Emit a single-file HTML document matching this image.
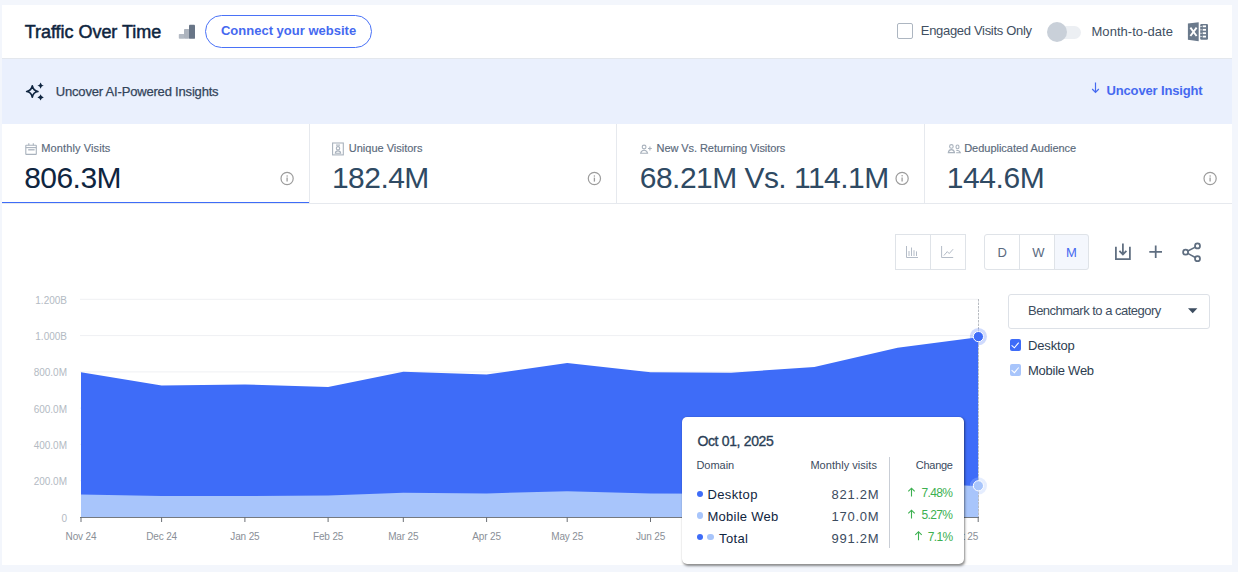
<!DOCTYPE html>
<html><head><meta charset="utf-8"><style>
*{box-sizing:border-box}
html,body{margin:0;padding:0;width:1238px;height:572px;overflow:hidden;background:#f3f6fc;font-family:'Liberation Sans',sans-serif;}
.card{position:absolute;left:2px;top:5px;width:1230px;height:560px;background:#fff}
.t{position:absolute;white-space:nowrap;font-family:'Liberation Sans',sans-serif;}
.abs{position:absolute}
.chart{position:absolute;left:0;top:0}
</style></head><body>
<div class="card"></div>
<div class="abs" style="left:2px;top:58px;width:1230px;height:1px;background:#e3e7ed"></div>
<div class="abs" style="left:2px;top:59px;width:1230px;height:65px;background:#eaf0fd"></div>
<!-- metric dividers -->
<div class="abs" style="left:309px;top:124px;width:1px;height:79px;background:#e6e9ee"></div>
<div class="abs" style="left:616px;top:124px;width:1px;height:79px;background:#e6e9ee"></div>
<div class="abs" style="left:924px;top:124px;width:1px;height:79px;background:#e6e9ee"></div>
<div class="abs" style="left:2px;top:203px;width:1230px;height:1px;background:#e6e9ee"></div>
<div class="abs" style="left:2px;top:202px;width:307px;height:1px;background:#3e6cf8"></div>
<!-- button -->
<div class="abs" style="left:205px;top:15px;width:167px;height:33px;border:1px solid #4a72f7;border-radius:16.5px"></div>
<!-- checkbox -->
<div class="abs" style="left:897px;top:23px;width:16px;height:16px;border:1.5px solid #adb6c1;border-radius:2px"></div>
<!-- toggle -->
<div class="abs" style="left:1050px;top:25.5px;width:31px;height:13px;background:#eceff3;border-radius:7px"></div>
<div class="abs" style="left:1047px;top:22px;width:20px;height:20px;background:#c9d0d9;border-radius:50%"></div>
<!-- toolbar groups -->
<div class="abs" style="left:895px;top:234px;width:71px;height:36px;border:1px solid #dfe3e8"></div>
<div class="abs" style="left:930px;top:234px;width:1px;height:36px;background:#dfe3e8"></div>
<div class="abs" style="left:1054px;top:234px;width:35px;height:36px;background:#f4f7fd;border-radius:0 3px 3px 0"></div>
<div class="abs" style="left:984px;top:234px;width:105px;height:36px;border:1px solid #dfe3e8;border-radius:3px"></div>
<div class="abs" style="left:1019px;top:234px;width:1px;height:36px;background:#dfe3e8"></div>
<div class="abs" style="left:1054px;top:234px;width:1px;height:36px;background:#dfe3e8"></div>
<!-- dropdown -->
<div class="abs" style="left:1008px;top:294px;width:202px;height:35px;border:1px solid #dde1e7;border-radius:3px"></div>
<div class="abs" style="left:1009.6px;top:339.3px;width:11.2px;height:11.4px;background:#3e6cf8;border-radius:2px"></div>
<div class="abs" style="left:1009.6px;top:364.3px;width:11.2px;height:11.4px;background:#a8c5fb;border-radius:2px"></div>
<svg class="chart" width="1238" height="572" viewBox="0 0 1238 572">
<line x1="80" y1="480.7" x2="978" y2="480.7" stroke="#eff0f3" stroke-width="1"/><line x1="80" y1="444.4" x2="978" y2="444.4" stroke="#eff0f3" stroke-width="1"/><line x1="80" y1="408.1" x2="978" y2="408.1" stroke="#eff0f3" stroke-width="1"/><line x1="80" y1="371.9" x2="978" y2="371.9" stroke="#eff0f3" stroke-width="1"/><line x1="80" y1="335.6" x2="978" y2="335.6" stroke="#eff0f3" stroke-width="1"/><line x1="80" y1="299.3" x2="978" y2="299.3" stroke="#eff0f3" stroke-width="1"/>
<polygon points="81.00,517.0 81.00,372.23 161.59,385.47 244.86,384.38 328.13,386.92 403.35,371.69 486.62,374.59 567.21,362.98 650.48,372.23 731.07,372.77 814.34,366.97 897.61,347.74 978.20,337.18 978.20,517.0" fill="#3e6cf8"/>
<polygon points="81.00,517.0 81.00,494.50 161.59,495.96 244.86,495.96 328.13,495.59 403.35,492.69 486.62,493.42 567.21,491.24 650.48,493.42 731.07,493.78 814.34,491.60 897.61,481.62 978.20,486.16 978.20,517.0" fill="#a8c5fb"/>
<line x1="80" y1="517.5" x2="979" y2="517.5" stroke="#75797f" stroke-width="1"/>
<line x1="81.0" y1="517" x2="81.0" y2="522" stroke="#6b6f75" stroke-width="1"/><line x1="161.6" y1="517" x2="161.6" y2="522" stroke="#6b6f75" stroke-width="1"/><line x1="244.9" y1="517" x2="244.9" y2="522" stroke="#6b6f75" stroke-width="1"/><line x1="328.1" y1="517" x2="328.1" y2="522" stroke="#6b6f75" stroke-width="1"/><line x1="403.3" y1="517" x2="403.3" y2="522" stroke="#6b6f75" stroke-width="1"/><line x1="486.6" y1="517" x2="486.6" y2="522" stroke="#6b6f75" stroke-width="1"/><line x1="567.2" y1="517" x2="567.2" y2="522" stroke="#6b6f75" stroke-width="1"/><line x1="650.5" y1="517" x2="650.5" y2="522" stroke="#6b6f75" stroke-width="1"/><line x1="731.1" y1="517" x2="731.1" y2="522" stroke="#6b6f75" stroke-width="1"/><line x1="814.3" y1="517" x2="814.3" y2="522" stroke="#6b6f75" stroke-width="1"/><line x1="897.6" y1="517" x2="897.6" y2="522" stroke="#6b6f75" stroke-width="1"/><line x1="978.2" y1="517" x2="978.2" y2="522" stroke="#6b6f75" stroke-width="1"/>
<line x1="978.5" y1="299" x2="978.5" y2="517" stroke="#b8bcc2" stroke-width="1" stroke-dasharray="2.5,1"/>
<g font-family="Liberation Sans" font-size="10" fill="#b3bac3"><text x="67" y="521.5" text-anchor="end">0</text><text x="67" y="485.2" text-anchor="end">200.0M</text><text x="67" y="448.9" text-anchor="end">400.0M</text><text x="67" y="412.6" text-anchor="end">600.0M</text><text x="67" y="376.4" text-anchor="end">800.0M</text><text x="67" y="340.1" text-anchor="end">1.000B</text><text x="67" y="303.8" text-anchor="end">1.200B</text></g>
<g font-family="Liberation Sans" font-size="10" fill="#8a8f97" letter-spacing="-0.15"><text x="81.0" y="540.4" text-anchor="middle">Nov 24</text><text x="161.6" y="540.4" text-anchor="middle">Dec 24</text><text x="244.9" y="540.4" text-anchor="middle">Jan 25</text><text x="328.1" y="540.4" text-anchor="middle">Feb 25</text><text x="403.3" y="540.4" text-anchor="middle">Mar 25</text><text x="486.6" y="540.4" text-anchor="middle">Apr 25</text><text x="567.2" y="540.4" text-anchor="middle">May 25</text><text x="650.5" y="540.4" text-anchor="middle">Jun 25</text><text x="731.1" y="540.4" text-anchor="middle">Jul 25</text><text x="814.3" y="540.4" text-anchor="middle">Aug 25</text><text x="897.6" y="540.4" text-anchor="middle">Sep 25</text><text x="978.2" y="540.4" text-anchor="end">Oct 25</text></g>
<circle cx="978.4" cy="336.6" r="8.6" fill="#3e6cf8" fill-opacity="0.25"/>
<circle cx="978.4" cy="336.6" r="5.1" fill="#3e6cf8" stroke="#fff" stroke-width="1"/>
<circle cx="978.4" cy="485.8" r="8.6" fill="#a8c5fb" fill-opacity="0.3"/>
<circle cx="978.4" cy="485.8" r="5.1" fill="#a8c5fb" stroke="#fff" stroke-width="1"/>
</svg>
<svg class="chart" width="1238" height="572" viewBox="0 0 1238 572">
<!-- bars icon -->
<rect x="178.8" y="34" width="5.6" height="4.8" rx="0.8" fill="#b3bac4"/>
<rect x="184" y="29" width="5.2" height="9.8" rx="0.8" fill="#adb4be"/>
<rect x="189" y="24.8" width="6" height="14" rx="0.9" fill="#687587"/>
<!-- excel -->
<path d="M1187.9,23.6 L1198.7,22.2 L1198.7,41.3 L1187.9,39.8 Z" fill="#6b7a8c"/>
<path d="M1190.4,27.6 L1196.6,36 M1196.6,27.6 L1190.4,36" stroke="#fff" stroke-width="1.9"/>
<rect x="1200.2" y="23.9" width="7.8" height="15.9" rx="1.2" fill="#6b7a8c"/>
<g fill="#fff">
<rect x="1202.7" y="25.4" width="3.3" height="1.8"/><rect x="1202.7" y="28.9" width="3.3" height="1.8"/>
<rect x="1202.7" y="32.3" width="3.3" height="1.8"/><rect x="1202.7" y="35.7" width="3.3" height="1.8"/>
<rect x="1200.2" y="26" width="1.6" height="0.7"/><rect x="1200.2" y="29.5" width="1.6" height="0.7"/>
<rect x="1200.2" y="32.9" width="1.6" height="0.7"/><rect x="1200.2" y="36.3" width="1.6" height="0.7"/>
</g>
<!-- sparkles -->
<path d="M32.3,85.9 Q33.196,90.604 37.9,91.5 Q33.196,92.396 32.3,97.1 Q31.403999999999996,92.396 26.699999999999996,91.5 Q31.403999999999996,90.604 32.3,85.9 Z" fill="none" stroke="#0f2540" stroke-width="1.75" stroke-linejoin="round"/>
<path d="M40.6,82.39999999999999 Q41.24,84.96 43.800000000000004,85.6 Q41.24,86.24 40.6,88.8 Q39.96,86.24 37.4,85.6 Q39.96,84.96 40.6,82.39999999999999 Z" fill="#0f2540"/>
<path d="M40.6,94.2 Q41.24,96.76 43.800000000000004,97.4 Q41.24,98.04 40.6,100.60000000000001 Q39.96,98.04 37.4,97.4 Q39.96,96.76 40.6,94.2 Z" fill="#0f2540"/>
<!-- down arrow -->
<path d="M1095.5,82.4 V92.3 M1092.2,89 L1095.5,92.4 L1098.8,89" fill="none" stroke="#4569f0" stroke-width="1.2"/>
<!-- calendar -->
<g fill="none" stroke="#a9b2bd" stroke-width="1.1">
<rect x="25.8" y="145.2" width="10.5" height="9.2" rx="0.5"/>
<line x1="25.8" y1="147.6" x2="36.3" y2="147.6"/>
<line x1="28.8" y1="143.2" x2="28.8" y2="145.2"/><line x1="33.3" y1="143.2" x2="33.3" y2="145.2"/>
<line x1="28.2" y1="149.8" x2="34.6" y2="149.8" stroke-width="1.3"/>
</g>
<!-- unique visitors -->
<g fill="none" stroke="#a9b2bd" stroke-width="1.1">
<rect x="332.6" y="143" width="10.7" height="11.9"/>
<line x1="336" y1="145.1" x2="340" y2="145.1"/>
<circle cx="338" cy="148.3" r="1.7"/>
<path d="M335.3,153.3 Q335.6,150.9 338,150.9 Q340.4,150.9 340.7,153.3 Z"/>
</g>
<!-- new vs returning -->
<g fill="none" stroke="#a9b2bd" stroke-width="1.1">
<circle cx="644.1" cy="147" r="1.9"/>
<path d="M640.6,153.3 Q641.2,150.2 644.1,150.2 Q647,150.2 647.6,153.3 Z"/>
<path d="M648,148.5 H651.8 M649.9,146.6 V150.4"/>
</g>
<!-- dedup -->
<g fill="none" stroke="#a9b2bd" stroke-width="1.1">
<circle cx="951.4" cy="146.4" r="1.8"/>
<path d="M948.3,152.6 Q948.8,149.6 951.4,149.6 Q954,149.6 954.5,152.6 Z"/>
<ellipse cx="957.5" cy="146.9" rx="1.5" ry="1.9"/>
<path d="M956.2,150.2 Q959.6,150.2 960.4,152.8 H956.2"/>
</g>
<circle cx="287.1" cy="178.5" r="6.1" fill="none" stroke="#9c9c9c" stroke-width="1.2"/><circle cx="287.1" cy="175.9" r="0.75" fill="#9c9c9c"/><line x1="287.1" y1="177.6" x2="287.1" y2="181.6" stroke="#9c9c9c" stroke-width="1.3"/><circle cx="594.4" cy="178.5" r="6.1" fill="none" stroke="#9c9c9c" stroke-width="1.2"/><circle cx="594.4" cy="175.9" r="0.75" fill="#9c9c9c"/><line x1="594.4" y1="177.6" x2="594.4" y2="181.6" stroke="#9c9c9c" stroke-width="1.3"/><circle cx="902.1" cy="178.4" r="6.1" fill="none" stroke="#9c9c9c" stroke-width="1.2"/><circle cx="902.1" cy="175.8" r="0.75" fill="#9c9c9c"/><line x1="902.1" y1="177.5" x2="902.1" y2="181.5" stroke="#9c9c9c" stroke-width="1.3"/><circle cx="1210.1" cy="178.5" r="6.1" fill="none" stroke="#9c9c9c" stroke-width="1.2"/><circle cx="1210.1" cy="175.9" r="0.75" fill="#9c9c9c"/><line x1="1210.1" y1="177.6" x2="1210.1" y2="181.6" stroke="#9c9c9c" stroke-width="1.3"/>
<!-- chart type icons -->
<g fill="none" stroke="#b4bcc7" stroke-width="1">
<path d="M906.5,246 V257.5 H918"/>
<path d="M909,256 V251 M911.5,256 V247.5 M914,256 V250.2 M916.5,256 V251.4"/>
<path d="M941.6,246 V257.5 H953.2"/>
<path d="M943.9,255.5 L947.3,251.6 L949.2,253.6 L953.1,249.2"/>
</g>
<!-- download / plus / share -->
<g fill="none" stroke="#5f6e80" stroke-width="1.75">
<path d="M1115.9,246.8 V259 H1129.9 V246.8"/>
<path d="M1122.9,243.6 V254.2 M1119.4,250.8 L1122.9,254.4 L1126.4,250.8"/>
<path d="M1149.3,251.8 H1162 M1155.7,245.5 V258"/>
<circle cx="1197.5" cy="245.9" r="2.5"/><circle cx="1185.6" cy="252.2" r="2.5"/><circle cx="1197.5" cy="258.7" r="2.5"/>
<path d="M1187.8,251 L1195.3,247.1 M1187.8,253.4 L1195.3,257.5" stroke-width="1.5"/>
</g>
<!-- dropdown triangle -->
<path d="M1188,308.2 H1197.4 L1192.7,313.2 Z" fill="#3d4d60"/>
<!-- legend checks -->
<path d="M1011.6,345.3 L1014.4,347.8 L1018.7,342.6" fill="none" stroke="#fff" stroke-width="1.05"/>
<path d="M1011.6,370.2 L1014.4,372.7 L1018.7,367.5" fill="none" stroke="#fff" stroke-width="1.05"/>
</svg>
<!-- tooltip -->
<div class="abs" style="left:682px;top:417px;width:281.5px;height:146.8px;background:#fff;border-radius:5px;box-shadow:1px 1.5px 2.5px rgba(0,0,0,0.45),0 0 1px rgba(0,0,0,0.2)"></div>
<div class="abs" style="left:889px;top:457px;width:1px;height:91px;background:#c9ced6"></div>
<div class="abs" style="left:696.8px;top:490.8px;width:6.5px;height:6.5px;border-radius:50%;background:#3e6cf8"></div>
<div class="abs" style="left:696.8px;top:512.2px;width:6.5px;height:6.5px;border-radius:50%;background:#a8c5fb"></div>
<div class="abs" style="left:696.8px;top:533.6px;width:6.5px;height:6.5px;border-radius:50%;background:#3e6cf8"></div>
<div class="abs" style="left:707.2px;top:533.6px;width:6.5px;height:6.5px;border-radius:50%;background:#a8c5fb"></div>
<svg class="chart" width="1238" height="572" viewBox="0 0 1238 572"><g fill="none" stroke="#3cb050" stroke-width="1.1">
<path d="M911.5,488.2 V496.6 M908.3,491.4 L911.5,488.2 L914.7,491.4"/>
<path d="M911.5,510.2 V518.6 M908.3,513.4 L911.5,510.2 L914.7,513.4"/>
<path d="M918.5,531.7 V540.3 M915.3,534.9 L918.5,531.7 L921.7,534.9"/>
</g></svg>
<div class="t" style="left:24.70px;top:23.06px;font-size:18px;line-height:18px;font-weight:400;-webkit-text-stroke:0.5px;color:#0f2540;letter-spacing:-0.031px;">Traffic Over Time</div>
<div class="t" style="left:220.90px;top:24.10px;font-size:13px;line-height:13px;font-weight:700;color:#4569f0;letter-spacing:0.011px;">Connect your website</div>
<div class="t" style="left:920.80px;top:23.60px;font-size:13px;line-height:13px;font-weight:400;color:#3f4f62;letter-spacing:-0.311px;">Engaged Visits Only</div>
<div class="t" style="left:1091.50px;top:24.60px;font-size:13px;line-height:13px;font-weight:400;color:#3f4f62;letter-spacing:0.042px;">Month-to-date</div>
<div class="t" style="left:55.80px;top:85.00px;font-size:13px;line-height:13px;font-weight:400;-webkit-text-stroke:0.25px;color:#33445a;letter-spacing:-0.185px;">Uncover AI-Powered Insights</div>
<div class="t" style="left:1106.50px;top:84.00px;font-size:13px;line-height:13px;font-weight:700;color:#4569f0;letter-spacing:-0.15px;">Uncover Insight</div>
<div class="t" style="left:41.30px;top:142.69px;font-size:11px;line-height:11px;font-weight:400;-webkit-text-stroke:0.15px;color:#5a697b;letter-spacing:0.108px;">Monthly Visits</div>
<div class="t" style="left:348.80px;top:142.69px;font-size:11px;line-height:11px;font-weight:400;-webkit-text-stroke:0.15px;color:#5a697b;letter-spacing:-0.007px;">Unique Visitors</div>
<div class="t" style="left:656.60px;top:142.69px;font-size:11px;line-height:11px;font-weight:400;-webkit-text-stroke:0.15px;color:#5a697b;letter-spacing:-0.076px;">New Vs. Returning Visitors</div>
<div class="t" style="left:964.20px;top:142.69px;font-size:11px;line-height:11px;font-weight:400;-webkit-text-stroke:0.15px;color:#5a697b;letter-spacing:-0.025px;">Deduplicated Audience</div>
<div class="t" style="left:24.20px;top:162.71px;font-size:30px;line-height:30px;font-weight:400;color:#0f2540;letter-spacing:-0.54px;">806.3M</div>
<div class="t" style="left:331.90px;top:162.71px;font-size:30px;line-height:30px;font-weight:400;color:#2f4a63;letter-spacing:-0.52px;">182.4M</div>
<div class="t" style="left:639.80px;top:162.71px;font-size:30px;line-height:30px;font-weight:400;color:#2f4a63;letter-spacing:-0.537px;">68.21M Vs. 114.1M</div>
<div class="t" style="left:946.80px;top:162.71px;font-size:30px;line-height:30px;font-weight:400;color:#2f4a63;letter-spacing:-0.42px;">144.6M</div>
<div class="t" style="left:697.40px;top:434.05px;font-size:14px;line-height:14px;font-weight:400;-webkit-text-stroke:0.35px;color:#2b3f57;letter-spacing:-0.336px;">Oct 01, 2025</div>
<div class="t" style="left:696.40px;top:459.59px;font-size:11px;line-height:11px;font-weight:400;color:#3b4b5e;letter-spacing:-0.02px;">Domain</div>
<div class="t" style="left:810.40px;top:459.59px;font-size:11px;line-height:11px;font-weight:400;color:#3b4b5e;letter-spacing:0.038px;">Monthly visits</div>
<div class="t" style="left:915.80px;top:459.59px;font-size:11px;line-height:11px;font-weight:400;color:#3b4b5e;letter-spacing:-0.28px;">Change</div>
<div class="t" style="left:707.40px;top:488.00px;font-size:13px;line-height:13px;font-weight:400;color:#0f2540;letter-spacing:0.383px;">Desktop</div>
<div class="t" style="left:707.40px;top:509.80px;font-size:13px;line-height:13px;font-weight:400;color:#0f2540;letter-spacing:0.278px;">Mobile Web</div>
<div class="t" style="left:719.00px;top:531.70px;font-size:13px;line-height:13px;font-weight:400;color:#0f2540;letter-spacing:0.375px;">Total</div>
<div class="t" style="left:831.60px;top:487.70px;font-size:13px;line-height:13px;font-weight:400;color:#3b4b5e;letter-spacing:0.74px;">821.2M</div>
<div class="t" style="left:831.60px;top:509.80px;font-size:13px;line-height:13px;font-weight:400;color:#3b4b5e;letter-spacing:0.74px;">170.0M</div>
<div class="t" style="left:831.60px;top:531.70px;font-size:13px;line-height:13px;font-weight:400;color:#3b4b5e;letter-spacing:0.74px;">991.2M</div>
<div class="t" style="left:921.50px;top:486.64px;font-size:12px;line-height:12px;font-weight:400;color:#3cb050;letter-spacing:-0.675px;">7.48%</div>
<div class="t" style="left:921.50px;top:508.64px;font-size:12px;line-height:12px;font-weight:400;color:#3cb050;letter-spacing:-0.675px;">5.27%</div>
<div class="t" style="left:927.70px;top:530.74px;font-size:12px;line-height:12px;font-weight:400;color:#3cb050;letter-spacing:-0.633px;">7.1%</div>
<div class="t" style="left:1028.00px;top:303.90px;font-size:13px;line-height:13px;font-weight:400;color:#3d4d60;letter-spacing:-0.514px;">Benchmark to a category</div>
<div class="t" style="left:1028.00px;top:338.90px;font-size:13px;line-height:13px;font-weight:400;color:#2d3d50;letter-spacing:-0.15px;">Desktop</div>
<div class="t" style="left:1028.00px;top:363.80px;font-size:13px;line-height:13px;font-weight:400;color:#2d3d50;letter-spacing:-0.256px;">Mobile Web</div>
<div class="t" style="left:997.60px;top:246.10px;font-size:13px;line-height:13px;font-weight:400;color:#5a6a80;letter-spacing:0px;">D</div>
<div class="t" style="left:1032.20px;top:246.10px;font-size:13px;line-height:13px;font-weight:400;color:#5a6a80;letter-spacing:0px;">W</div>
<div class="t" style="left:1065.90px;top:246.10px;font-size:13px;line-height:13px;font-weight:400;color:#4569f0;letter-spacing:0px;">M</div>
</body></html>
